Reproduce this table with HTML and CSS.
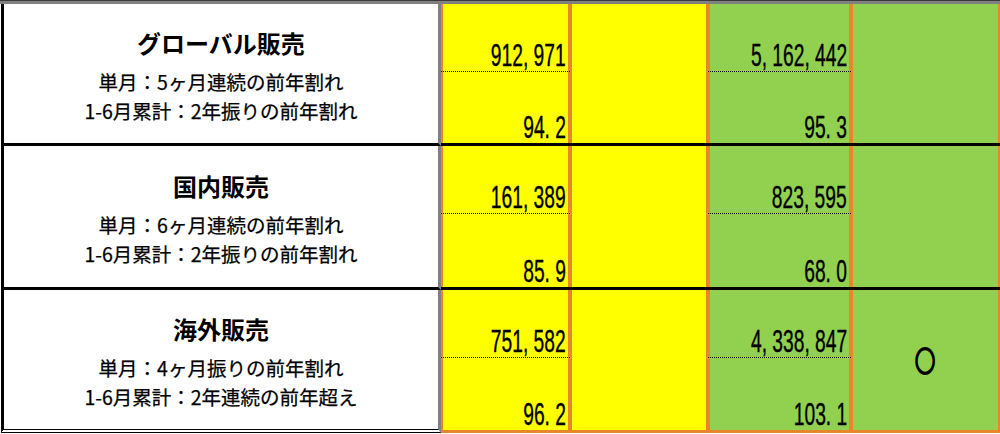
FILE: index.html
```html
<!DOCTYPE html>
<html lang="ja">
<head>
<meta charset="utf-8">
<title>販売</title>
<link rel="stylesheet" href="styles.css">
</head>
<body>
<div class="page">
  <div class="sheet">
    <div class="label">
      <div class="title">グローバル販売</div>
      <div class="line">単月：5ヶ月連続の前年割れ</div>
      <div class="line">1-6月累計：2年振りの前年割れ</div>
    </div>
    <div class="cell yellow split">
      <div class="half top"><span class="num">912, 971</span></div>
      <div class="half"><span class="num">94. 2</span></div>
    </div>
    <div class="cell yellow"></div>
    <div class="cell green split">
      <div class="half top"><span class="num">5, 162, 442</span></div>
      <div class="half"><span class="num">95. 3</span></div>
    </div>
    <div class="cell green"></div>

    <div class="label">
      <div class="title">国内販売</div>
      <div class="line">単月：6ヶ月連続の前年割れ</div>
      <div class="line">1-6月累計：2年振りの前年割れ</div>
    </div>
    <div class="cell yellow split">
      <div class="half top"><span class="num">161, 389</span></div>
      <div class="half"><span class="num">85. 9</span></div>
    </div>
    <div class="cell yellow"></div>
    <div class="cell green split">
      <div class="half top"><span class="num">823, 595</span></div>
      <div class="half"><span class="num">68. 0</span></div>
    </div>
    <div class="cell green"></div>

    <div class="label last">
      <div class="title">海外販売</div>
      <div class="line">単月：4ヶ月振りの前年割れ</div>
      <div class="line">1-6月累計：2年連続の前年超え</div>
    </div>
    <div class="cell yellow split last">
      <div class="half top"><span class="num">751, 582</span></div>
      <div class="half"><span class="num">96. 2</span></div>
    </div>
    <div class="cell yellow last"></div>
    <div class="cell green split last">
      <div class="half top"><span class="num">4, 338, 847</span></div>
      <div class="half"><span class="num">103. 1</span></div>
    </div>
    <div class="cell green last mark-cell"><span class="mark">○</span></div>
  </div>
</div>
</body>
</html>
```

FILE: styles.css
```css
html, body {
  margin: 0;
  padding: 0;
  background: #ffffff;
}

.page {
  width: 1000px;
  height: 434px;
  border-top: 1px solid #3a3a3a;
  box-sizing: border-box;
  overflow: hidden;
}

.sheet {
  display: grid;
  grid-template-columns: 440px 129px 138px 143px 149px;
  grid-template-rows: 142px 144px 144px;
  border-top: 3px solid #808080;
  padding-left: 1px;
}

.label {
  box-sizing: border-box;
  border-left: 3px solid #000;
  border-right: 3px solid #808080;
  border-bottom: 3px solid #000;
  background: #fff;
  display: flex;
  flex-direction: column;
  align-items: center;
  justify-content: center;
  padding-top: 4px;
  font-family: "Noto Sans CJK JP", "Noto Sans", sans-serif;
  color: #000;
}

.label.last {
  border-bottom: 4px double #000;
  margin-bottom: 1px;
}

.title {
  font-size: 24px;
  font-weight: 700;
  line-height: 34px;
  margin-bottom: 7px;
}

.line {
  font-size: 19.5px;
  line-height: 29.5px;
  -webkit-text-stroke: 0.25px #000;
}

.cell {
  box-sizing: border-box;
  border-bottom: 3px solid #000;
  box-shadow: inset 2px 0 0 #e8862a, inset -2px 0 0 #e8862a;
}

.cell.last {
  border-bottom: 3px solid #e8862a;
  margin-bottom: 1px;
}

.yellow { background: #ffff00; }
.green { background: #92d050; }

.split {
  display: flex;
  flex-direction: column;
}

.half {
  flex: 1;
  display: flex;
  justify-content: flex-end;
  align-items: flex-end;
  padding-right: 4px;
  padding-bottom: 1px;
}

.half.top {
  flex: 0 0 68px;
  box-sizing: border-box;
  border-bottom: 1px dotted #000;
}

.num {
  display: inline-block;
  font-family: "Liberation Sans", Arial, sans-serif;
  font-size: 31px;
  line-height: 29px;
  color: #000;
  white-space: pre;
  -webkit-text-stroke: 0.4px #000;
  transform: scaleX(0.62);
  transform-origin: 100% 50%;
}

.mark-cell {
  display: flex;
  align-items: center;
  justify-content: center;
}

.mark {
  display: inline-block;
  font-family: "Noto Sans CJK JP", sans-serif;
  font-weight: 700;
  font-size: 28px;
  line-height: 30px;
  color: #000;
  -webkit-text-stroke: 2.2px #000;
  transform: scaleX(0.72);
}
```
